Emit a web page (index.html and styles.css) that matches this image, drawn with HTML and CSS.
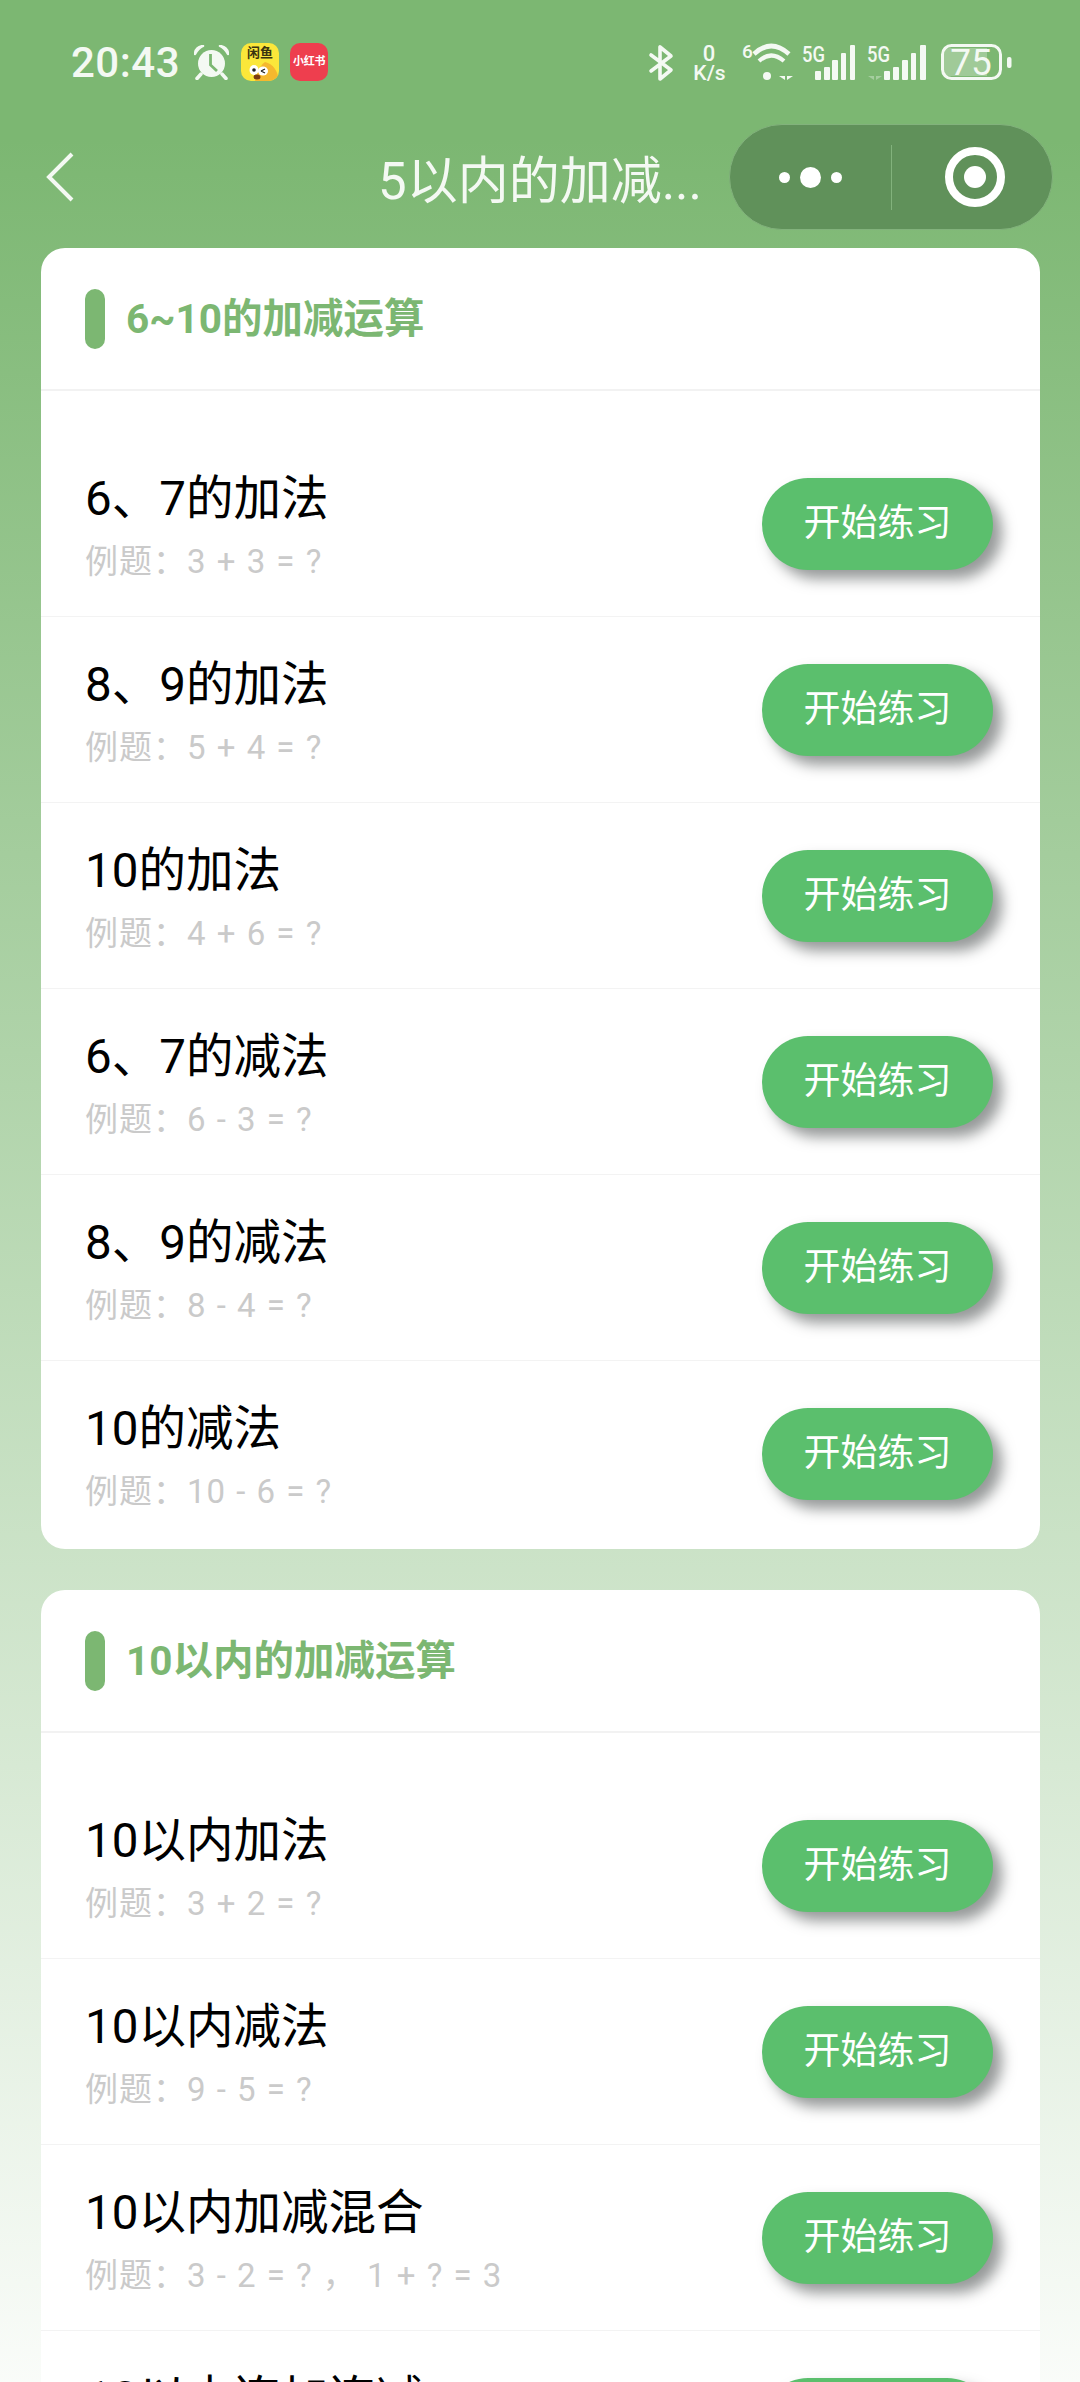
FILE: index.html
```html
<!DOCTYPE html>
<html lang="zh-CN">
<head>
  <meta charset="UTF-8" />
  <meta name="viewport" content="width=device-width, initial-scale=1" />
  <title>5以内的加减运算</title>
  <link rel="stylesheet" href="styles.css">
</head>
<body>
  <div class="status-bar">
    <div class="status-left">
      <span class="time">20:43</span>
      <svg class="alarm" viewBox="0 0 35 35" width="35" height="35">
        <circle cx="17.5" cy="18.5" r="13.5" fill="#f4f9f3" />
        <path d="M1 9 Q1.500 2 9 1 Q4 3.500 1 9 Z M34 9 Q33.500 2 26 1 Q31 3.500 34 9 Z" fill="#f4f9f3" stroke="#f4f9f3" stroke-width="2.500" stroke-linejoin="round" />
        <path d="M7 29 L3 33.500 M28 29 L32 33.500" stroke="#f4f9f3" stroke-width="3.500" stroke-linecap="round" />
        <path d="M16.500 9 V20 L23 26" fill="none" stroke="#7cb772" stroke-width="2.800" />
      </svg>
      <div class="app-icon app-yellow">
        <span class="app-name">闲鱼</span>
        <svg class="chick" viewBox="0 0 38 20" width="38" height="20">
          <path d="M14 20 Q18 4 24 1 Q36 4 38 20 Z" fill="#f5b82e" />
          <ellipse cx="13" cy="9" rx="4.500" ry="5" fill="#fff" />
          <ellipse cx="22" cy="10" rx="5" ry="4.500" fill="#fff" />
          <circle cx="13" cy="9" r="1.800" fill="#222" />
          <path d="M20 10 L24 8 M20 10 L24 12" stroke="#222" stroke-width="1.300" />
          <ellipse cx="16" cy="16" rx="3.500" ry="2.500" fill="#7a3b10" />
        </svg>
      </div>
      <div class="app-icon app-red">小红书</div>
    </div>
    <svg class="status-icons" viewBox="645 36 370 52" width="370" height="52">
      <!-- bluetooth -->
      <path d="M660 47 V79 L671 70 L651 55 M651 71 L671 56 L660 47" fill="none" stroke="#f4f9f3" stroke-width="3.600" stroke-linejoin="round" stroke-linecap="round" />
      <!-- speed -->
      <text x="709" y="61" class="st-num" font-size="22" text-anchor="middle">0</text>
      <text x="709.500" y="80" class="st-num" font-size="21" text-anchor="middle">K/s</text>
      <!-- wifi -->
      <text x="742" y="58" class="st-num" font-size="19">6</text>
      <path d="M754 54 Q771 38 789 54" fill="none" stroke="#f4f9f3" stroke-width="4.600" />
      <path d="M759 61 Q771 50 784 61" fill="none" stroke="#f4f9f3" stroke-width="4.200" />
      <circle cx="767" cy="76" r="4" fill="#f4f9f3" />
      <path d="M785 70 V80 L779 76 H785 Z M787 70 V80 L793 76 H787 Z" fill="#f4f9f3" />
      <!-- sim 1 -->
      <text x="802" y="62" class="st-num" font-size="22" textLength="23" lengthAdjust="spacingAndGlyphs">5G</text>
      <g fill="#f4f9f3">
        <rect x="815" y="71" width="6" height="9" rx="1" />
        <rect x="824" y="67" width="6" height="13" rx="1" />
        <rect x="832" y="60" width="6" height="20" rx="1" />
        <rect x="841" y="53" width="5" height="27" rx="1" />
        <rect x="850" y="45" width="5" height="35" rx="1" />
      </g>
      <!-- sim 2 -->
      <text x="867" y="62" class="st-num" font-size="22" textLength="23" lengthAdjust="spacingAndGlyphs">5G</text>
      <path d="M874 71 V80 L868 76 H874 Z M876 71 V80 L882 76 H876 Z" fill="#f4f9f3" opacity="0.350" />
      <g fill="#f4f9f3">
        <rect x="884" y="71" width="6" height="9" rx="1" />
        <rect x="893" y="67" width="6" height="13" rx="1" />
        <rect x="902" y="60" width="6" height="20" rx="1" />
        <rect x="911" y="53" width="5" height="27" rx="1" />
        <rect x="920" y="45" width="6" height="35" rx="1" />
      </g>
      <!-- battery -->
      <path d="M944 54 Q944 48 950 48 H987 V76 H950 Q944 76 944 70 Z" fill="#f4f9f3" opacity="0.300" />
      <rect x="942.500" y="45.500" width="58" height="33" rx="9" fill="none" stroke="#f4f9f3" stroke-width="3" />
      <text x="971" y="75" class="st-batt" font-size="37" text-anchor="middle">75</text>
      <rect x="1007" y="57" width="4.500" height="11" rx="2" fill="#f4f9f3" />
    </svg>
  </div>

  <div class="nav-bar">
    <svg class="back" viewBox="0 0 28 50" width="28" height="50">
      <path d="M26 2 L3 25 L26 48" fill="none" stroke="#f4f9f3" stroke-width="4" />
    </svg>
    <div class="nav-title">5以内的加减...</div>
    <div class="capsule">
      <div class="capsule-dots">
        <i class="dot"></i><i class="dot dot-big"></i><i class="dot"></i>
      </div>
      <div class="capsule-line"></div>
      <div class="capsule-target"><i class="target-in"></i></div>
    </div>
  </div>

  <main class="content">
    <section class="card">
      <div class="card-head"><i class="head-mark"></i><h2>6~10的加减运算</h2></div>
      <div class="list">
        <div class="row">
          <div class="row-text"><div class="row-title">6、7的加法</div><div class="row-sub">例题：3 + 3 = ?</div></div>
          <a class="btn">开始练习</a>
        </div>
        <div class="row">
          <div class="row-text"><div class="row-title">8、9的加法</div><div class="row-sub">例题：5 + 4 = ?</div></div>
          <a class="btn">开始练习</a>
        </div>
        <div class="row">
          <div class="row-text"><div class="row-title">10的加法</div><div class="row-sub">例题：4 + 6 = ?</div></div>
          <a class="btn">开始练习</a>
        </div>
        <div class="row">
          <div class="row-text"><div class="row-title">6、7的减法</div><div class="row-sub">例题：6 - 3 = ?</div></div>
          <a class="btn">开始练习</a>
        </div>
        <div class="row">
          <div class="row-text"><div class="row-title">8、9的减法</div><div class="row-sub">例题：8 - 4 = ?</div></div>
          <a class="btn">开始练习</a>
        </div>
        <div class="row">
          <div class="row-text"><div class="row-title">10的减法</div><div class="row-sub">例题：10 - 6 = ?</div></div>
          <a class="btn">开始练习</a>
        </div>
      </div>
    </section>

    <section class="card">
      <div class="card-head"><i class="head-mark"></i><h2>10以内的加减运算</h2></div>
      <div class="list">
        <div class="row">
          <div class="row-text"><div class="row-title">10以内加法</div><div class="row-sub">例题：3 + 2 = ?</div></div>
          <a class="btn">开始练习</a>
        </div>
        <div class="row">
          <div class="row-text"><div class="row-title">10以内减法</div><div class="row-sub">例题：9 - 5 = ?</div></div>
          <a class="btn">开始练习</a>
        </div>
        <div class="row">
          <div class="row-text"><div class="row-title">10以内加减混合</div><div class="row-sub">例题：3 - 2 = ? ， 1 + ? = 3</div></div>
          <a class="btn">开始练习</a>
        </div>
        <div class="row">
          <div class="row-text"><div class="row-title">10以内连加连减</div><div class="row-sub">例题：2 + 3 + 4 = ?</div></div>
          <a class="btn">开始练习</a>
        </div>
      </div>
    </section>
  </main>
</body>
</html>
```

FILE: styles.css
```css
* {
  box-sizing: border-box;
  font-family: Roboto, 'Noto Sans CJK SC', sans-serif;
}

html, body {
  margin: 0;
  padding: 0;
  height: 2382px;
  overflow: hidden;
}

body {
  background: linear-gradient(to bottom, #7cb772 0, #7cb772 140px, #fff 2480px);
}

/* status bar */
.status-bar {
  height: 124px;
  display: flex;
  align-items: center;
  justify-content: space-between;
  padding: 0 65px 0 71px;
}

.status-left {
  display: flex;
  align-items: center;
}

.time {
  font-size: 42px;
  font-weight: 500;
  color: #f4f9f3;
  letter-spacing: 0.5px;
}

.alarm {
  margin-left: 14px;
}

.app-icon {
  width: 38px;
  height: 38px;
  border-radius: 10px;
  overflow: hidden;
}

.app-yellow {
  margin-left: 12px;
  background: #fbe73a;
  position: relative;
  text-align: center;
}

.app-name {
  display: block;
  font-size: 13px;
  line-height: 16px;
  margin-top: 2px;
  font-weight: 700;
  color: #3a3410;
}

.chick {
  position: absolute;
  left: 0;
  bottom: 0;
}

.app-red {
  margin-left: 11px;
  background: #ee3e4e;
  color: #fff;
  font-size: 11px;
  font-weight: 700;
  line-height: 38px;
  text-align: center;
  letter-spacing: -0.3px;
}

.st-num {
  fill: #f4f9f3;
  font-weight: 500;
}

.st-batt {
  fill: #f4f9f3;
  font-weight: 400;
}

/* nav */
.nav-bar {
  height: 106px;
  display: flex;
  align-items: center;
  padding: 0 27px 0 46px;
}

.nav-title {
  margin-left: 304px;
  font-size: 51px;
  color: #f4f9f3;
  white-space: nowrap;
}

.capsule {
  margin-left: auto;
  flex: none;
  width: 324px;
  height: 106px;
  border-radius: 53px;
  background: #60915a;
  border: 1px solid #82b27c;
  display: flex;
  align-items: center;
}

.capsule-dots {
  width: 161px;
  display: flex;
  align-items: center;
  justify-content: center;
  gap: 10px;
}

.dot {
  width: 11px;
  height: 11px;
  border-radius: 50%;
  background: #fff;
}

.dot-big {
  width: 21px;
  height: 21px;
}

.capsule-line {
  width: 1px;
  height: 65px;
  background: #82b27c;
}

.capsule-target {
  width: 60px;
  height: 60px;
  margin-left: 53px;
  border: 8px solid #fff;
  border-radius: 50%;
  display: flex;
  align-items: center;
  justify-content: center;
}

.target-in {
  width: 22px;
  height: 22px;
  border-radius: 50%;
  background: #fff;
}

/* cards */
.content {
  padding: 18px 40px 0 41px;
}

.card {
  background: #fff;
  border-radius: 24px;
  margin-bottom: 41px;
}

.card-head {
  height: 143px;
  display: flex;
  align-items: center;
  padding: 0 44px;
  border-bottom: 2px solid #f2f2f2;
}

.head-mark {
  width: 20px;
  height: 60px;
  border-radius: 10px;
  background: #7cb772;
  margin-right: 21px;
}

.card-head h2 {
  margin: -6px 0 0;
  font-size: 40.500px;
  font-weight: 700;
  color: #7cb772;
}

.list {
  padding: 40px 0 2px;
}

.row {
  height: 186px;
  display: flex;
  align-items: center;
  justify-content: space-between;
  padding: 0 47px 0 44px;
  border-bottom: 1px solid #f3f3f3;
}

.row:last-child {
  border-bottom: none;
}

.row-text {
  padding-top: 5px;
}

.row-title {
  font-size: 47.500px;
  line-height: 60px;
  color: #000;
}

.row-sub {
  margin-top: 11px;
  font-size: 33px;
  line-height: 44px;
  letter-spacing: 1px;
  word-spacing: 1px;
  color: #cacaca;
}

.btn {
  width: 231px;
  height: 92px;
  border-radius: 46px;
  background: #5bbf6d;
  color: #fff;
  font-size: 37px;
  line-height: 92px;
  text-align: center;
  box-shadow: 9px 9px 14px rgba(80, 85, 85, 0.6);
}
```
